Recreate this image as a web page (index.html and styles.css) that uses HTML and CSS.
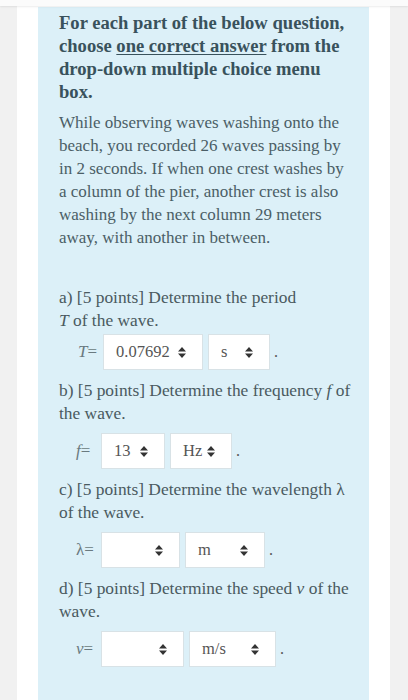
FILE: index.html
```html
<!DOCTYPE html>
<html>
<head>
<meta charset="utf-8">
<link rel="stylesheet" href="styles.css">
</head>
<body>
<div class="topbar"></div>
<div class="page">
  <div class="box">
    <p class="lead">For each part of the below question, choose <u>one correct answer</u> from the drop-down multiple choice menu box.</p>
    <p class="intro">While observing waves washing onto the beach, you recorded 26 waves passing by in 2 seconds. If when one crest washes by a column of the pier, another crest is also washing by the next column 29 meters away, with another in between.</p>

    <p class="q q-first">a) [5 points] Determine the period<br><i>T</i> of the wave.</p>
    <div class="row row-a">
      <span class="lbl"><i>T</i>=</span>
      <span class="sel w100"><span class="val">0.07692</span><svg class="arr" viewBox="0 0 8 11"><path d="M4 0 L8 4.5 H0 Z M0 6.5 H8 L4 11 Z"/></svg></span>
      <span class="sel w62"><span class="val">s</span><svg class="arr" viewBox="0 0 8 11"><path d="M4 0 L8 4.5 H0 Z M0 6.5 H8 L4 11 Z"/></svg></span>
      <span class="dot">.</span>
    </div>

    <p class="q">b) [5 points] Determine the frequency <i>f</i> of the wave.</p>
    <div class="row">
      <span class="lbl"><i>f</i>=</span>
      <span class="sel w64"><span class="val">13</span><svg class="arr" viewBox="0 0 8 11"><path d="M4 0 L8 4.5 H0 Z M0 6.5 H8 L4 11 Z"/></svg></span>
      <span class="sel w62"><span class="val">Hz</span><svg class="arr" viewBox="0 0 8 11"><path d="M4 0 L8 4.5 H0 Z M0 6.5 H8 L4 11 Z"/></svg></span>
      <span class="dot">.</span>
    </div>

    <p class="q">c) [5 points] Determine the wavelength λ of the wave.</p>
    <div class="row">
      <span class="lbl">λ=</span>
      <span class="sel w79"><span class="val"></span><svg class="arr" viewBox="0 0 8 11"><path d="M4 0 L8 4.5 H0 Z M0 6.5 H8 L4 11 Z"/></svg></span>
      <span class="sel w80"><span class="val">m</span><svg class="arr" viewBox="0 0 8 11"><path d="M4 0 L8 4.5 H0 Z M0 6.5 H8 L4 11 Z"/></svg></span>
      <span class="dot">.</span>
    </div>

    <p class="q">d) [5 points] Determine the speed <i>v</i> of the wave.</p>
    <div class="row">
      <span class="lbl"><i>v</i>=</span>
      <span class="sel w83"><span class="val"></span><svg class="arr" viewBox="0 0 8 11"><path d="M4 0 L8 4.5 H0 Z M0 6.5 H8 L4 11 Z"/></svg></span>
      <span class="sel w87"><span class="val">m/s</span><svg class="arr" viewBox="0 0 8 11"><path d="M4 0 L8 4.5 H0 Z M0 6.5 H8 L4 11 Z"/></svg></span>
      <span class="dot">.</span>
    </div>
  </div>
</div>
</body>
</html>
```

FILE: styles.css
```css
html, body {
  margin: 0;
  padding: 0;
}
body {
  background: #f1f1f1;
  font-family: "Liberation Serif", "DejaVu Serif", serif;
  color: #4f5f66;
  height: 700px;
  overflow: hidden;
}
.topbar {
  height: 6px;
  background: #fbfbfb;
  box-shadow: 0 1px 2px rgba(0,0,0,0.08);
  position: relative;
  z-index: 1;
}
.page {
  box-sizing: border-box;
  background: #fff;
  margin: 0 18px 0 17px;
  padding: 1px 21px 0 21px;
  height: 694px;
}
.box {
  box-sizing: border-box;
  background: #dcf0f8;
  padding: 4px 18px 0 21px;
  height: 693px;
}
p {
  margin: 0;
}
.lead {
  font-weight: bold;
  font-size: 18.6px;
  line-height: 23px;
  color: #39525c;
}
.lead u {
  text-decoration-thickness: 1px;
  text-underline-offset: 2px;
}
.intro {
  margin-top: 8px;
  font-size: 17px;
  line-height: 23px;
  color: #4b5e66;
}
.q {
  margin-top: 9px;
  font-size: 17.4px;
  line-height: 23px;
  color: #4a5a60;
}
.q-first {
  margin-top: 37px;
}
.row {
  display: flex;
  align-items: center;
  margin-top: 8px;
  height: 36px;
  padding-left: 17px;
}
.row-a {
  margin-top: 2px;
  padding-left: 19px;
}
.lbl {
  font-size: 17px;
  color: #6a7a80;
  width: 25px;
  white-space: nowrap;
}
.sel {
  box-sizing: border-box;
  height: 36px;
  background: #fff;
  border: 1px solid #d8e2e6;
  display: flex;
  align-items: center;
  justify-content: space-between;
  padding: 0 16px 0 12px;
  margin-right: 5px;
  font-size: 16.5px;
  color: #555;
}
.arr {
  width: 8px;
  height: 11px;
  fill: #333;
}
.dot {
  font-size: 16px;
  color: #555;
  margin-left: -1px;
}
.w100 { width: 100px; }
.w62 { width: 62px; }
.w64 { width: 64px; }
.w79 { width: 79px; }
.w80 { width: 80px; }
.w83 { width: 83px; }
.w87 { width: 87px; }
```
